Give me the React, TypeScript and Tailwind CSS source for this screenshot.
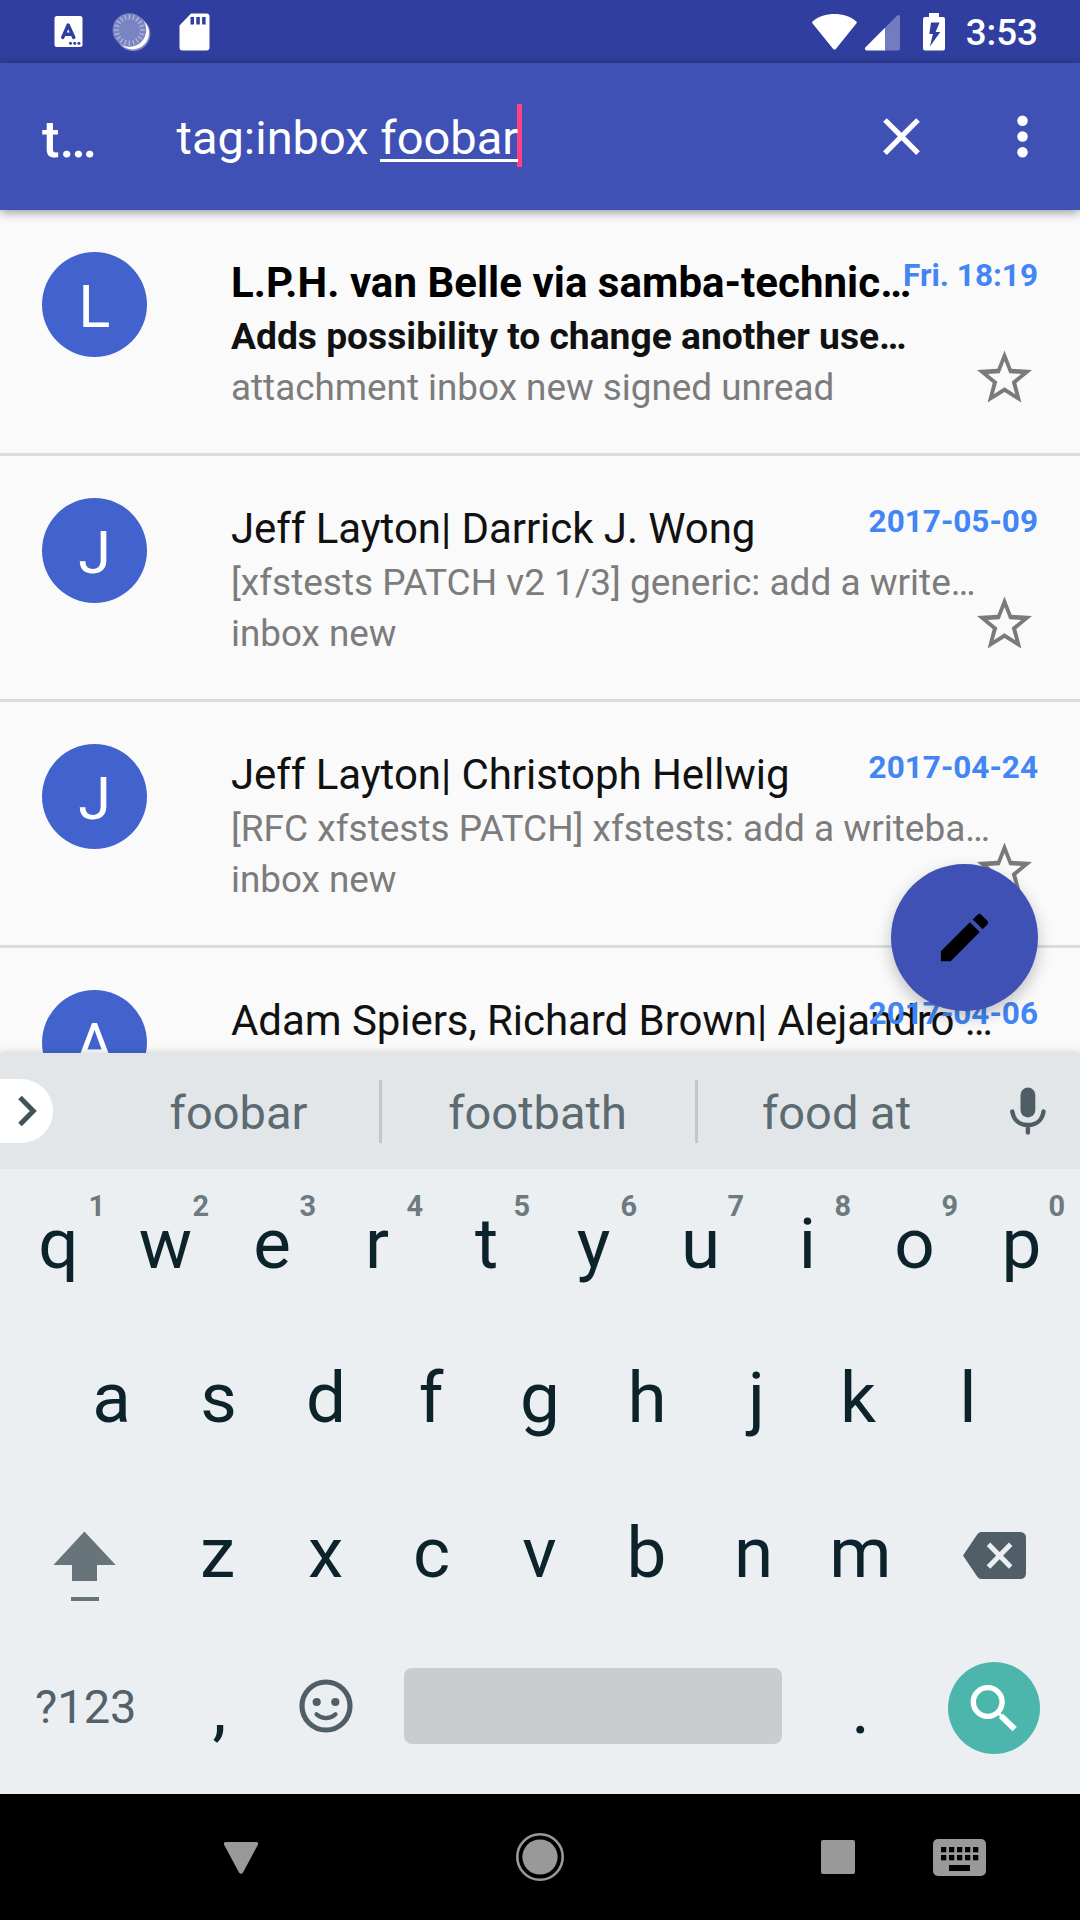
import React from "react";

type Mail = {
  initial: string;
  sender: string;
  subject: string;
  tags: string;
  date: string;
  unread?: boolean;
};

const mails: Mail[] = [
  {
    initial: "L",
    sender: "L.P.H. van Belle via samba-technic…",
    subject: "Adds possibility to change another use…",
    tags: "attachment inbox new signed unread",
    date: "Fri. 18:19",
    unread: true,
  },
  {
    initial: "J",
    sender: "Jeff Layton| Darrick J. Wong",
    subject: "[xfstests PATCH v2 1/3] generic: add a write…",
    tags: "inbox new",
    date: "2017-05-09",
  },
  {
    initial: "J",
    sender: "Jeff Layton| Christoph Hellwig",
    subject: "[RFC xfstests PATCH] xfstests: add a writeba…",
    tags: "inbox new",
    date: "2017-04-24",
  },
  {
    initial: "A",
    sender: "Adam Spiers, Richard Brown| Alejandro …",
    subject: "",
    tags: "",
    date: "2017-04-06",
  },
];

const ticks = Array.from({ length: 20 }, (_, i) => i * 18);

function StatusBar() {
  return (
    <div className="flex h-[63px] items-center bg-[#303f9f] pl-[54px] pr-[42px]">
      <svg className="h-[31px] w-[29px]" viewBox="0 0 29 31">
        <rect x="0.5" y="0" width="28" height="31" rx="2.5" fill="#fff" />
        <path d="M8.7 21.5 14.2 9 19.8 21.5M10.5 18.2h7.4" fill="none" stroke="#303f9f" strokeWidth="3.4" strokeLinecap="round" strokeLinejoin="round" />
        <circle cx="16.5" cy="27.2" r="1.5" fill="#303f9f" />
        <circle cx="20.7" cy="27.2" r="1.5" fill="#303f9f" />
        <circle cx="24.9" cy="27.2" r="1.5" fill="#303f9f" />
      </svg>
      <svg className="ml-[29px] h-[40px] w-[40px]" viewBox="0 0 40 40">
        <circle cx="21.2" cy="21.8" r="17.2" fill="#7f89c5" />
        <circle cx="20.6" cy="21" r="16.4" fill="#fff" />
        <circle cx="17.4" cy="18" r="16.8" fill="#7a84c2" />
        {ticks.map((a) => (
          <path key={a} d="M17.4 2.4v5" stroke="#b4bae0" strokeWidth="1.3" transform={`rotate(${a} 17.4 18)`} />
        ))}
      </svg>
      <svg className="ml-[27px] h-[38px] w-[31px]" viewBox="0 0 31 38">
        <path fill="#fff" fillRule="evenodd" d="M12 0.5H27.5a3 3 0 0 1 3 3V34.5a3 3 0 0 1-3 3H3.500a3 3 0 0 1-3-3V12.500ZM11.500 4V11.500H15V4ZM17.300 4V11.500H20.800V4ZM23.100 4V11.500H26.600V4Z" />
      </svg>
      <div className="flex-1" />
      <svg className="h-[38px] w-[133px]" viewBox="0 0 133 38">
        <path fill="#fff" d="M.6 10.500Q-.5 9.200.9 8.200C12-1.300 33-1.300 44 8.200Q45.400 9.200 44.300 10.500L24 35.700Q22.500 37.500 21 35.700Z" />
        <path fill="#fff" fillOpacity=".32" d="M73 14.700 85 2.800Q87.700.9 88 4V35.500a2 2 0 0 1-2 2H73Z" />
        <path fill="#fff" d="M73 14.700V37.500H54.500Q52 36.500 53.300 34.500Z" />
        <path fill="#fff" fillRule="evenodd" d="M117 0h10v4h4a2 2 0 0 1 2 2v29.500a2 2 0 0 1-2 2h-18a2 2 0 0 1-2-2V6a2 2 0 0 1 2-2h4ZM119 9.500 117.300 21h3.600L117.900 33.600 128.300 19h-4.700L127.600 9.500Z" />
      </svg>
      <span className="ml-[21px] pt-[3px] text-[36.75px] font-medium leading-[62px] text-white">3:53</span>
    </div>
  );
}

function Toolbar() {
  return (
    <div className="relative z-10 flex h-[147px] items-center bg-[#3f51b5] text-white shadow-[0_2px_10px_rgba(0,0,0,0.42)]">
      <div className="w-[135px] pl-[42px] pt-[4px] text-[52.5px] font-medium leading-[60px]">t…</div>
      <div className="ml-[41.5px] flex items-center">
        <span className="whitespace-pre pt-[3px] text-[47px] leading-[64px]">tag:inbox </span>
        <span className="relative pt-[3px] text-[47px] leading-[64px]">
          foobar
          <span className="absolute bottom-[8px] left-0 h-[3px] w-full bg-white" />
        </span>
        <span className="-ml-px mb-[2px] h-[63px] w-[5px] bg-[#ff4081]" />
      </div>
      <div className="flex-1" />
      <svg className="h-[63px] w-[63px]" viewBox="0 0 24 24" fill="#fff">
        <path d="M19 6.410 17.590 5 12 10.590 6.410 5 5 6.410 10.590 12 5 17.590 6.410 19 12 13.410 17.590 19 19 17.590 13.410 12z" />
      </svg>
      <svg className="ml-[58px] mr-[26px] h-[63px] w-[63px]" viewBox="0 0 24 24" fill="#fff">
        <circle cx="12" cy="6" r="2" />
        <circle cx="12" cy="12" r="2" />
        <circle cx="12" cy="18" r="2" />
      </svg>
    </div>
  );
}

function Star() {
  return (
    <svg className="h-[53px] w-[55px]" viewBox="0 0 55 53">
      <path
        fill="#7a7a7a"
        fillRule="evenodd"
        d="M27.500.5 34.600 18.800 55 20 39.300 33 44.400 52.500 27.500 42 10.600 52.500 15.700 33 0 20 20.400 18.800ZM27.500 11 22.700 23.200 10.800 23.900 20.300 31.700 16.700 44.200 27.500 37.300 38.300 44.200 34.700 31.700 44.200 23.900 32.300 23.200Z"
      />
    </svg>
  );
}

function MailRow({ mail }: { mail: Mail }) {
  return (
    <div className="grid h-[246px] shrink-0 grid-cols-[189px_1fr] border-b-[3px] border-[#dcdcdc] pl-[42px]">
      <div className="mt-[42px] flex h-[105px] w-[105px] items-center justify-center rounded-full bg-[#4263ce] pt-[4px] text-[59px] leading-none text-white">
        {mail.initial}
      </div>
      <div className="grid">
        <div className="col-start-1 row-start-1 whitespace-pre pt-[47px]">
          <div className={mail.unread ? "text-[42px] font-bold leading-[51px] tracking-[0.03px] text-black" : "text-[42px] leading-[51px] tracking-[-0.06px] text-[#111]"}>
            {mail.sender}
          </div>
          <div className={mail.unread ? "mt-[3px] text-[37.2px] font-bold leading-[51px] text-[#111]" : "mt-[3px] text-[37px] leading-[51px] text-[#7c7c7c]"}>
            {mail.subject}
          </div>
          <div className="text-[36.85px] leading-[51px] text-[#7c7c7c]">{mail.tags}</div>
        </div>
        <div className="col-start-1 row-start-1 flex flex-col items-end justify-between pb-[50px] pr-[42px] pt-[47px]">
          <span className="text-[31.5px] font-bold leading-[38px] text-[#4285f4]">{mail.date}</span>
          <div className="mr-[6px]">
            <Star />
          </div>
        </div>
      </div>
    </div>
  );
}

function Suggestions() {
  return (
    <div className="flex h-[116px] items-center bg-[#e2e6e9] text-[47px] text-[#5c6a71]">
      <div className="flex h-[64px] w-[53px] items-center rounded-r-full bg-white">
        <svg className="ml-[17px] h-[32px] w-[22px]" viewBox="0 0 22 32">
          <path d="M3 2.500 16.300 16 3 29.500" fill="none" stroke="#42525a" strokeWidth="5" />
        </svg>
      </div>
      <div className="ml-[45px] w-[281px] pt-[3px] text-center leading-[64px]">foobar</div>
      <div className="h-[63px] w-[3px] bg-[#c2c7ca]" />
      <div className="w-[311px] pt-[3px] text-center leading-[64px]">footbath</div>
      <div className="ml-[2px] h-[63px] w-[3px] bg-[#c2c7ca]" />
      <div className="w-[277px] pt-[3px] text-center leading-[64px]">food at</div>
      <svg className="ml-[35px] h-[48px] w-[36px]" viewBox="0 0 36 48">
        <rect x="10.500" y="0.500" width="14.800" height="30" rx="7.400" fill="#4f5e65" />
        <path d="M2.300 24.500C3.500 33.500 10 38 17.900 38S32.300 33.500 33.500 24.500M17.900 38v7.500" fill="none" stroke="#4f5e65" strokeWidth="4.400" strokeLinecap="round" />
      </svg>
    </div>
  );
}

// Optical centring: narrow or asymmetric glyphs are centred on their ink.
const nudges: Record<string, string> = {
  a: "pr-[1px]",
  s: "pr-[1px]",
  z: "pr-[2px]",
  c: "pr-[2px]",
  e: "pr-[1px]",
  r: "pr-[5px]",
  f: "pr-[4px]",
  k: "pr-[6px]",
  j: "pl-[5px]",
  ",": "pl-[2px]",
  ".": "pl-[2px]",
};

function Key({ label, hint }: { label: string; hint?: string }) {
  return (
    <div className={`relative w-[107px] text-center text-[71px] leading-[84px] text-[#0c232c] ${nudges[label] ?? ""}`}>
      {label}
      {hint && (
        <span
          className={
            hint === "1"
              ? "absolute -top-[13px] right-[7px] text-[28.9px] font-bold leading-[34px] text-[#6d7a80]"
              : "absolute -top-[13px] right-[10px] text-[28.9px] font-bold leading-[34px] text-[#6d7a80]"
          }
        >
          {hint}
        </span>
      )}
    </div>
  );
}

function Keyboard() {
  return (
    <div className="h-[625px] bg-[#ebeff2]">
      <div className="flex h-[154px] justify-center pt-[33px]">
        {"qwertyuiop".split("").map((k, i) => (
          <Key key={k} label={k} hint={String((i + 1) % 10)} />
        ))}
      </div>
      <div className="flex h-[155px] justify-center pt-[33px]">
        {"asdfghjkl".split("").map((k) => (
          <Key key={k} label={k} />
        ))}
      </div>
      <div className="flex h-[154px] pt-[33px]">
        <div className="w-[165px] pl-[53px] pt-[20px]">
          <svg className="h-[72px] w-[63px]" viewBox="0 0 63 72" fill="#67757b">
            <path d="M31.400.5 62.700 34H44V50H19V34H.4Z" />
            <rect x="18" y="66" width="28" height="4" />
          </svg>
        </div>
        {"zxcvbnm".split("").map((k) => (
          <Key key={k} label={k} />
        ))}
        <div className="pl-[49px] pt-[21px]">
          <svg className="h-[47px] w-[63px]" viewBox="0 0 63 47">
            <path d="M0 23.500 14.300 2.200Q16 0 18.500 0H57.500a5.500 5.500 0 0 1 5.500 5.500v36a5.500 5.500 0 0 1-5.500 5.500H18.500Q16 47 14.300 44.800Z" fill="#505f67" />
            <path d="M25.500 12.300 47.700 35M47.700 12.300 25.500 35" stroke="#ebeff2" strokeWidth="5" fill="none" />
          </svg>
        </div>
      </div>
      <div className="flex h-[162px] pt-[35px]">
        <div className="w-[165px] pl-[35px] pt-[8px] text-[47px] leading-[64px] text-[#52616a]">?123</div>
        <Key label="," />
        <svg className="mt-[11.5px] ml-[26.5px] h-[54px] w-[54px]" viewBox="0 0 54 54">
          <circle cx="27" cy="27" r="24" fill="none" stroke="#505f67" strokeWidth="5.200" />
          <circle cx="17.700" cy="23" r="4.100" fill="#505f67" />
          <circle cx="36.300" cy="23" r="4.100" fill="#505f67" />
          <path d="M17.500 35.300Q27 43 36.500 35.300" fill="none" stroke="#505f67" strokeWidth="4.200" strokeLinecap="round" />
        </svg>
        <div className="ml-[51.5px] mt-px h-[76px] w-[378px] rounded-[8px] bg-[#c9cdd0]" />
        <div className="ml-[24px]">
          <Key label="." />
        </div>
        <div className="ml-[35px] -mt-[5px] h-[92px] w-[92px] rounded-full bg-[#4db6ac]">
          <svg className="h-[92px] w-[92px]" viewBox="0 0 92 92" fill="none" stroke="#fff">
            <circle cx="39.700" cy="40" r="14.400" strokeWidth="5.400" />
            <path d="M50 50.500 53.500 54.200" strokeWidth="3" />
            <path d="M53 53.800 66.700 67.200" strokeWidth="6" />
          </svg>
        </div>
      </div>
    </div>
  );
}

function NavBar() {
  return (
    <div className="flex h-[126px] items-center bg-black">
      <svg className="ml-[223px] mt-[1px] h-[34px] w-[36px]" viewBox="0 0 36 34">
        <path d="M2.500 1H33.500Q36 1.500 34.800 4L20 31.500Q18 34 16 31.500L1.200 4Q0 1.500 2.500 1Z" fill="#999" />
      </svg>
      <svg className="ml-[256.5px] h-[48px] w-[48px]" viewBox="0 0 48 48">
        <circle cx="24" cy="24" r="22.700" fill="none" stroke="#999" strokeWidth="2.600" />
        <circle cx="24" cy="24" r="17.600" fill="#999" />
      </svg>
      <div className="ml-[257.5px] h-[34px] w-[34px] rounded-[2px] bg-[#999]" />
      <svg className="ml-[78px] mt-[1px] h-[37px] w-[53px]" viewBox="0 0 53 37">
        <rect width="53" height="37" rx="5" fill="#999" />
        {[8, 16, 24, 32, 40].map((x) => (
          <React.Fragment key={x}>
            <rect x={x} y="8" width="5.300" height="5.300" />
            <rect x={x} y="16" width="5.300" height="5.300" />
          </React.Fragment>
        ))}
        <rect x="16" y="26" width="21" height="6" />
      </svg>
    </div>
  );
}

export default function App() {
  return (
    <div className="flex h-[1920px] w-[1080px] flex-col overflow-hidden bg-[#fafafa] font-['Roboto',sans-serif]">
      <StatusBar />
      <Toolbar />
      <div className="relative flex h-[843px] flex-col overflow-hidden">
        {mails.map((m) => (
          <MailRow key={m.date} mail={m} />
        ))}
        <button className="absolute bottom-[42px] right-[42px] flex h-[147px] w-[147px] items-center justify-center rounded-full bg-[#3f51b5] shadow-[0_6px_16px_rgba(0,0,0,0.24)]">
          <svg className="h-[63px] w-[63px]" viewBox="0 0 24 24">
            <path d="M3 17.250V21h3.750L17.810 9.940l-3.750-3.750L3 17.250zM20.710 7.040c.39-.39.39-1.020 0-1.410l-2.340-2.340c-.39-.39-1.020-.39-1.410 0l-1.830 1.830 3.750 3.750 1.830-1.830z" />
          </svg>
        </button>
      </div>
      <div className="relative shadow-[0_-1px_7px_rgba(0,0,0,0.16)]">
        <Suggestions />
        <Keyboard />
      </div>
      <NavBar />
    </div>
  );
}
